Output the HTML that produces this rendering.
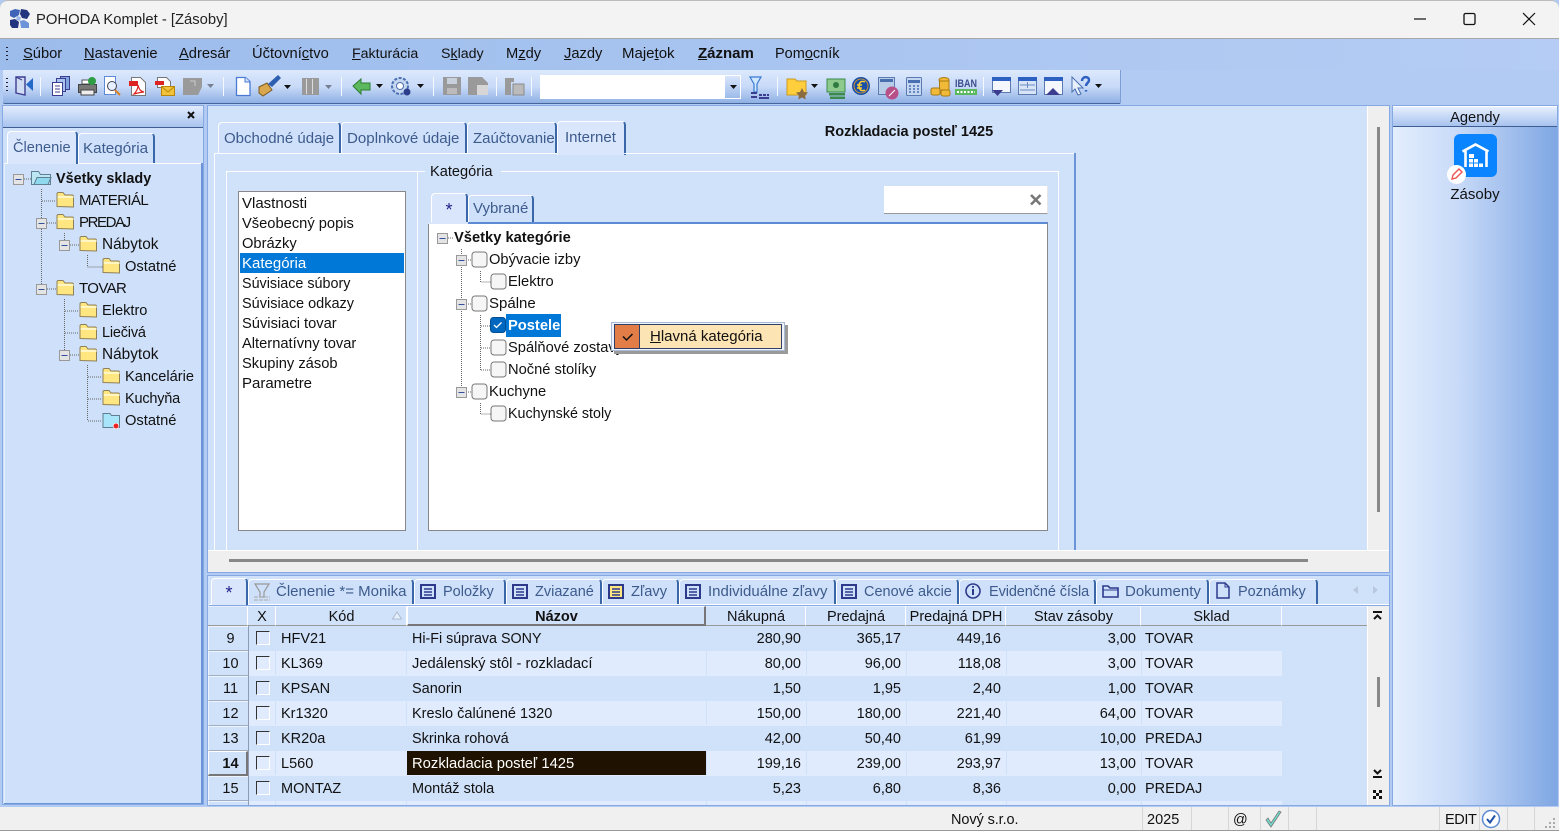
<!DOCTYPE html>
<html lang="sk"><head><meta charset="utf-8"><title>POHODA Komplet - [Zásoby]</title>
<style>
html,body{margin:0;padding:0;width:1559px;height:831px;overflow:hidden;background:#b2cbf3}
body{position:relative;font:14.7px/18px "Liberation Sans",sans-serif;color:#111}
div{position:absolute;box-sizing:border-box}
.t{white-space:nowrap;height:18px}
.g{font-size:14.5px}
.r{text-align:right}
.c{text-align:center}
.b{font-weight:bold}
.tb{color:#3d5b8c;font-size:15px}
.tab{background:#cfe0fa;border-top:1px solid #fff;border-left:1px solid #fff;border-right:2px solid #3a67a8;border-radius:4px 4px 0 0}
.act{background:#d9e6fc;border-right:2px solid #3a67a8}
.h{top:606px;height:20px;background:#d0e1fa;border-right:1px solid #fff;border-bottom:1px solid #999;border-top:1px solid #e6effe}
.rh{left:208px;width:40px;height:25px;background:#d0e1fa;border-top:1px solid #eef4fe;border-left:1px solid #eef4fe;border-bottom:1px solid #a0aec4}
.l{left:248px;width:1034px;height:25px;background:#e0ecfe}
.cb{left:256px;width:14px;height:14px;border-top:1px solid #333;border-left:1px solid #333;border-right:1px solid #fff;border-bottom:1px solid #fff;background:#d9e6fb}
.s{top:807px;width:1px;height:23px;background:#d6d6d6}
svg{position:absolute;left:0;top:0}
</style></head><body>
<!-- title -->
<div style="left:0;top:0;width:1559px;height:39px;background:#f3f3f3;border-bottom:1px solid #a8a8a8;border-radius:8px 8px 0 0;border-top:1px solid #bbb"></div>
<div class="t" style="left:36px;top:11px;font-size:14.8px;color:#222">POHODA Komplet - [Zásoby]</div>
<!-- menu -->
<div style="left:0;top:39px;width:1559px;height:31px;background:linear-gradient(90deg,#9cbcec,#b5cdf4)"></div>
<div class="t" style="left:23px;top:45px"><u>S</u>úbor</div>
<div class="t" style="left:84px;top:45px"><u>N</u>astavenie</div>
<div class="t" style="left:179px;top:45px"><u>A</u>dresár</div>
<div class="t" style="left:252px;top:45px">Účtovní<u>c</u>tvo</div>
<div class="t" style="left:352px;top:45px;font-size:14.2px"><u>F</u>akturácia</div>
<div class="t" style="left:441px;top:45px;font-size:14.2px">S<u>k</u>lady</div>
<div class="t" style="left:506px;top:45px">M<u>z</u>dy</div>
<div class="t" style="left:564px;top:45px"><u>J</u>azdy</div>
<div class="t" style="left:622px;top:45px;font-size:15px">Maje<u>t</u>ok</div>
<div class="t b" style="left:698px;top:45px;font-size:15px"><u>Z</u>áznam</div>
<div class="t" style="left:775px;top:45px;font-size:14.5px">Pom<u>o</u>cník</div>
<!-- toolbar -->
<div style="left:3px;top:70px;width:1118px;height:34px;background:linear-gradient(#dde9fd,#c8daf8 50%,#8fb0e4);border-bottom:1px solid #46659a;border-right:1px solid #7f9fd4;border-radius:0 0 2px 2px"></div>
<div style="left:540px;top:75px;width:185px;height:24px;background:#fff"></div>
<div style="left:725px;top:75px;width:16px;height:24px;background:linear-gradient(#d8e5fb,#9dbbea);border-right:1px solid #fff;border-top:1px solid #fff;border-bottom:1px solid #fff"></div>
<!-- left panel -->
<div style="left:2px;top:105px;width:202px;height:700px;background:#cfe0fa;border:1px solid #86a9e4"></div>
<div style="left:3px;top:106px;width:200px;height:22px;background:linear-gradient(#e2ecfd,#a8c3ef);border-bottom:1px solid #3f5f92"></div>
<div style="left:4px;top:163px;width:198px;height:1px;background:#fff"></div>
<div style="left:4px;top:163px;width:1px;height:640px;background:#e6effe"></div>
<div style="left:201px;top:163px;width:2px;height:641px;background:#6a93d8"></div>
<div style="left:4px;top:803px;width:199px;height:1px;background:#6a93d8"></div>
<div class="tab act" style="left:7px;top:131px;width:71px;height:33px;border-bottom:0"></div>
<div class="tab" style="left:78px;top:133px;width:77px;height:30px"></div>
<div class="t tb" style="left:13px;top:139px;font-size:14.6px">Členenie</div>
<div class="t tb" style="left:83px;top:140px;font-size:15.2px">Kategória</div>
<div class="t b" style="left:56px;top:170px;font-size:14.4px">Všetky sklady</div>
<div class="t" style="left:79px;top:192px;font-size:15px;letter-spacing:-.6px">MATERIÁL</div>
<div class="t" style="left:79px;top:214px;font-size:15px;letter-spacing:-1.4px">PREDAJ</div>
<div class="t" style="left:102px;top:236px;font-size:15.4px">Nábytok</div>
<div class="t" style="left:125px;top:258px">Ostatné</div>
<div class="t" style="left:79px;top:280px;font-size:15px;letter-spacing:-.6px">TOVAR</div>
<div class="t" style="left:102px;top:302px;font-size:14.6px">Elektro</div>
<div class="t" style="left:102px;top:324px;font-size:14.5px;letter-spacing:-.2px">Liečivá</div>
<div class="t" style="left:102px;top:346px;font-size:15.4px">Nábytok</div>
<div class="t" style="left:125px;top:368px;font-size:14.6px">Kancelárie</div>
<div class="t" style="left:125px;top:390px;font-size:14.5px;letter-spacing:-.2px">Kuchyňa</div>
<div class="t" style="left:125px;top:412px">Ostatné</div>
<!-- center panel -->
<div style="left:207px;top:105px;width:1183px;height:468px;background:#d0e1fa;border:1px solid #86a9e4"></div>
<div style="left:1367px;top:106px;width:22px;height:466px;background:#efefef;border-left:1px solid #fff"></div>
<div style="left:1377px;top:127px;width:3px;height:385px;background:#888"></div>
<div style="left:208px;top:550px;width:1181px;height:22px;background:#efefef;border-top:1px solid #fff"></div>
<div style="left:229px;top:559px;width:1079px;height:3px;background:#888"></div>
<div class="tab" style="left:218px;top:122px;width:123px;height:32px"></div>
<div class="tab" style="left:341px;top:122px;width:126px;height:32px"></div>
<div class="tab" style="left:467px;top:122px;width:90px;height:32px"></div>
<div class="tab act" style="left:557px;top:121px;width:69px;height:34px;border-bottom:0"></div>
<div class="t tb" style="left:224px;top:130px">Obchodné údaje</div>
<div class="t tb" style="left:347px;top:130px;font-size:15.1px">Doplnkové údaje</div>
<div class="t tb" style="left:473px;top:130px">Zaúčtovanie</div>
<div class="t tb" style="left:565px;top:129px">Internet</div>
<div class="t b c" style="left:760px;top:123px;width:298px;font-size:14.5px">Rozkladacia posteľ 1425</div>
<div style="left:214px;top:153px;width:862px;height:1px;background:#fff"></div>
<div style="left:557px;top:153px;width:68px;height:1px;background:#d9e6fc"></div>
<div style="left:214px;top:153px;width:1px;height:397px;background:#fff"></div>
<div style="left:1074px;top:153px;width:2px;height:397px;background:#6a93d8"></div>
<!-- group frames -->
<div style="left:226px;top:171px;width:192px;height:379px;border:1px solid #fff;border-bottom:0"></div>
<div style="left:418px;top:171px;width:641px;height:379px;border:1px solid #fff;border-bottom:0;border-left:0"></div>
<div style="left:425px;top:165px;width:76px;height:14px;background:#d0e1fa"></div>
<div class="t" style="left:430px;top:163px;font-size:14.6px">Kategória</div>
<!-- listbox -->
<div style="left:238px;top:191px;width:168px;height:340px;background:#fff;border:1px solid #888"></div>
<div style="left:240px;top:253px;width:164px;height:20px;background:#0078d7"></div>
<div class="t" style="left:242px;top:195px;font-size:15px">Vlastnosti</div>
<div class="t" style="left:242px;top:215px">Všeobecný popis</div>
<div class="t" style="left:242px;top:235px">Obrázky</div>
<div class="t" style="left:242px;top:255px;color:#fff;font-size:15px">Kategória</div>
<div class="t" style="left:242px;top:275px;font-size:14.35px">Súvisiace súbory</div>
<div class="t" style="left:242px;top:295px;font-size:14.5px">Súvisiace odkazy</div>
<div class="t" style="left:242px;top:315px">Súvisiaci tovar</div>
<div class="t" style="left:242px;top:335px">Alternatívny tovar</div>
<div class="t" style="left:242px;top:355px">Skupiny zásob</div>
<div class="t" style="left:242px;top:375px;font-size:15px">Parametre</div>
<!-- kategoria -->
<div style="left:884px;top:186px;width:164px;height:28px;background:#fff;border-bottom:1px solid #999;border-right:1px solid #e6e6e6"></div>
<div class="tab act" style="left:431px;top:193px;width:37px;height:31px;border-bottom:0"></div>
<div class="tab" style="left:468px;top:195px;width:66px;height:28px"></div>
<div class="t c" style="left:431px;top:201px;width:36px;color:#22228a;font-size:18px">*</div>
<div class="t tb" style="left:473px;top:200px">Vybrané</div>
<div style="left:428px;top:222px;width:620px;height:309px;background:#fff;border:1px solid #888;border-top:2px solid #5d8ad4"></div>
<div style="left:428px;top:222px;width:40px;height:2px;background:#d9e6fc"></div>
<div style="left:506px;top:314px;width:55px;height:23px;background:#0078d7"></div>
<div class="t b" style="left:454px;top:229px">Všetky kategórie</div>
<div class="t" style="left:489px;top:251px">Obývacie izby</div>
<div class="t" style="left:508px;top:273px">Elektro</div>
<div class="t" style="left:489px;top:295px;font-size:15px">Spálne</div>
<div class="t b" style="left:508px;top:317px;color:#fff">Postele</div>
<div class="t" style="left:508px;top:339px">Spálňové zostavy</div>
<div class="t" style="left:508px;top:361px">Nočné stolíky</div>
<div class="t" style="left:489px;top:383px">Kuchyne</div>
<div class="t" style="left:508px;top:405px;font-size:14.3px">Kuchynské stoly</div>
<!-- popup -->
<div style="left:611px;top:322px;width:174px;height:29px;background:#eef2fa;border:1px solid #a9b9d6;box-shadow:3px 3px 0 #9a9a9a"></div>
<div style="left:614px;top:324px;width:168px;height:25px;background:#fde4b4;border:1px solid #2f3f66"></div>
<div style="left:614px;top:324px;width:26px;height:25px;background:#e27d47;border:1px solid #2f3f66"></div>
<div class="t" style="left:650px;top:328px;font-size:15px"><u>H</u>lavná kategória</div>
<!-- bottom panel -->
<div style="left:207px;top:575px;width:1183px;height:231px;background:#d0e1fa;border:1px solid #86a9e4"></div>
<div style="left:209px;top:604px;width:1180px;height:2px;background:linear-gradient(#fff 50%,#86a9e4 50%)"></div>
<div class="tab act" style="left:211px;top:578px;width:37px;height:27px;border-bottom:0"></div>
<div class="tab" style="left:248px;top:579px;width:166px;height:25px"></div>
<div class="tab" style="left:414px;top:579px;width:92px;height:25px"></div>
<div class="tab" style="left:506px;top:579px;width:96px;height:25px"></div>
<div class="tab" style="left:602px;top:579px;width:77px;height:25px"></div>
<div class="tab" style="left:679px;top:579px;width:157px;height:25px"></div>
<div class="tab" style="left:836px;top:579px;width:123px;height:25px"></div>
<div class="tab" style="left:959px;top:579px;width:137px;height:25px"></div>
<div class="tab" style="left:1096px;top:579px;width:113px;height:25px"></div>
<div class="tab" style="left:1209px;top:579px;width:109px;height:25px"></div>
<div class="t c" style="left:211px;top:584px;width:36px;color:#22228a;font-size:18px">*</div>
<div class="t tb" style="left:276px;top:583px">Členenie *= Monika</div>
<div class="t tb" style="left:443px;top:583px;font-size:14.5px">Položky</div>
<div class="t tb" style="left:535px;top:583px;font-size:14.5px">Zviazané</div>
<div class="t tb" style="left:631px;top:583px;font-size:14.7px">Zľavy</div>
<div class="t tb" style="left:708px;top:583px">Individuálne zľavy</div>
<div class="t tb" style="left:864px;top:583px;font-size:14.5px">Cenové akcie</div>
<div class="t tb" style="left:989px;top:583px;font-size:14.5px;letter-spacing:-.1px">Evidenčné čísla</div>
<div class="t tb" style="left:1125px;top:583px">Dokumenty</div>
<div class="t tb" style="left:1238px;top:583px;font-size:14.5px">Poznámky</div>
<!-- grid -->
<div class="h" style="left:208px;width:40px"></div>
<div class="h" style="left:248px;width:28px"></div>
<div class="h" style="left:276px;width:131px"></div>
<div class="h" style="left:407px;width:299px;border:1px solid #fff;border-right:2px solid #777;border-bottom:2px solid #777"></div>
<div class="h" style="left:706px;width:100px"></div>
<div class="h" style="left:806px;width:100px"></div>
<div class="h" style="left:906px;width:100px"></div>
<div class="h" style="left:1006px;width:135px"></div>
<div class="h" style="left:1141px;width:141px"></div>
<div class="h" style="left:1282px;width:85px;border-right:0"></div>
<div class="t g c" style="left:248px;top:608px;width:28px">X</div>
<div class="t g c" style="left:276px;top:608px;width:131px">Kód</div>
<div class="t g c b" style="left:407px;top:608px;width:299px">Názov</div>
<div class="t g c" style="left:706px;top:608px;width:100px">Nákupná</div>
<div class="t g c" style="left:806px;top:608px;width:100px">Predajná</div>
<div class="t g c" style="left:906px;top:608px;width:100px">Predajná DPH</div>
<div class="t g c" style="left:1006px;top:608px;width:135px">Stav zásoby</div>
<div class="t g c" style="left:1141px;top:608px;width:141px">Sklad</div>
<div class="l" style="top:651px"></div><div class="l" style="top:701px"></div><div class="l" style="top:751px"></div><div class="l" style="top:801px;height:4px"></div>
<div style="left:407px;top:751px;width:299px;height:24px;background:#201200"></div>
<div class="rh" style="top:626px"></div><div class="rh" style="top:651px"></div><div class="rh" style="top:676px"></div><div class="rh" style="top:701px"></div><div class="rh" style="top:726px"></div>
<div class="rh" style="top:751px;border:1px solid #fff;border-right:2px solid #777;border-bottom:2px solid #777"></div>
<div class="rh" style="top:776px"></div><div class="rh" style="top:801px;height:4px;border-bottom:0"></div>
<div style="left:248px;top:626px;width:1px;height:179px;background:#8d9cb4"></div>
<div class="cb" style="top:631px"></div><div class="cb" style="top:656px;background:#e0ecfe"></div><div class="cb" style="top:681px"></div><div class="cb" style="top:706px;background:#e0ecfe"></div><div class="cb" style="top:731px"></div><div class="cb" style="top:756px;background:#e0ecfe"></div><div class="cb" style="top:781px"></div>
<!-- rows -->
<div class="t g c" style="left:208px;top:630px;width:45px">9</div><div class="t g" style="left:281px;top:630px">HFV21</div><div class="t g" style="left:412px;top:630px;font-size:14.3px">Hi-Fi súprava SONY</div><div class="t g r" style="left:706px;top:630px;width:95px">280,90</div><div class="t g r" style="left:806px;top:630px;width:95px">365,17</div><div class="t g r" style="left:906px;top:630px;width:95px">449,16</div><div class="t g r" style="left:1006px;top:630px;width:130px">3,00</div><div class="t g" style="left:1145px;top:630px">TOVAR</div>
<div class="t g c" style="left:208px;top:655px;width:45px">10</div><div class="t g" style="left:281px;top:655px">KL369</div><div class="t g" style="left:412px;top:655px;font-size:14.7px">Jedálenský stôl - rozkladací</div><div class="t g r" style="left:706px;top:655px;width:95px">80,00</div><div class="t g r" style="left:806px;top:655px;width:95px">96,00</div><div class="t g r" style="left:906px;top:655px;width:95px">118,08</div><div class="t g r" style="left:1006px;top:655px;width:130px">3,00</div><div class="t g" style="left:1145px;top:655px">TOVAR</div>
<div class="t g c" style="left:208px;top:680px;width:45px">11</div><div class="t g" style="left:281px;top:680px">KPSAN</div><div class="t g" style="left:412px;top:680px">Sanorin</div><div class="t g r" style="left:706px;top:680px;width:95px">1,50</div><div class="t g r" style="left:806px;top:680px;width:95px">1,95</div><div class="t g r" style="left:906px;top:680px;width:95px">2,40</div><div class="t g r" style="left:1006px;top:680px;width:130px">1,00</div><div class="t g" style="left:1145px;top:680px">TOVAR</div>
<div class="t g c" style="left:208px;top:705px;width:45px">12</div><div class="t g" style="left:281px;top:705px">Kr1320</div><div class="t g" style="left:412px;top:705px">Kreslo čalúnené 1320</div><div class="t g r" style="left:706px;top:705px;width:95px">150,00</div><div class="t g r" style="left:806px;top:705px;width:95px">180,00</div><div class="t g r" style="left:906px;top:705px;width:95px">221,40</div><div class="t g r" style="left:1006px;top:705px;width:130px">64,00</div><div class="t g" style="left:1145px;top:705px">TOVAR</div>
<div class="t g c" style="left:208px;top:730px;width:45px">13</div><div class="t g" style="left:281px;top:730px">KR20a</div><div class="t g" style="left:412px;top:730px">Skrinka rohová</div><div class="t g r" style="left:706px;top:730px;width:95px">42,00</div><div class="t g r" style="left:806px;top:730px;width:95px">50,40</div><div class="t g r" style="left:906px;top:730px;width:95px">61,99</div><div class="t g r" style="left:1006px;top:730px;width:130px">10,00</div><div class="t g" style="left:1145px;top:730px">PREDAJ</div>
<div class="t g c b" style="left:208px;top:755px;width:45px">14</div><div class="t g" style="left:281px;top:755px">L560</div><div class="t g" style="left:412px;top:755px;color:#fff;font-size:14.8px">Rozkladacia posteľ 1425</div><div class="t g r" style="left:706px;top:755px;width:95px">199,16</div><div class="t g r" style="left:806px;top:755px;width:95px">239,00</div><div class="t g r" style="left:906px;top:755px;width:95px">293,97</div><div class="t g r" style="left:1006px;top:755px;width:130px">13,00</div><div class="t g" style="left:1145px;top:755px">TOVAR</div>
<div class="t g c" style="left:208px;top:780px;width:45px">15</div><div class="t g" style="left:281px;top:780px">MONTAZ</div><div class="t g" style="left:412px;top:780px">Montáž stola</div><div class="t g r" style="left:706px;top:780px;width:95px">5,23</div><div class="t g r" style="left:806px;top:780px;width:95px">6,80</div><div class="t g r" style="left:906px;top:780px;width:95px">8,36</div><div class="t g r" style="left:1006px;top:780px;width:130px">0,00</div><div class="t g" style="left:1145px;top:780px">PREDAJ</div>
<!-- grid scroll -->
<div style="left:1367px;top:606px;width:22px;height:199px;background:#efefef;border-left:1px solid #fff"></div>
<div style="left:1377px;top:677px;width:3px;height:30px;background:#888"></div>
<!-- right -->
<div style="left:1392px;top:105px;width:166px;height:701px;background:linear-gradient(90deg,#e3eefe,#c8daf8 40%,#7fa7e3);border:1px solid #86a9e4"></div>
<div style="left:1393px;top:106px;width:164px;height:21px;background:linear-gradient(#e6effd,#a7c2ef);border-bottom:1px solid #3f5f92;border-top:1px solid #fff"></div>
<div class="t c" style="left:1393px;top:109px;width:164px">Agendy</div>
<div class="t c" style="left:1393px;top:186px;width:164px;font-size:15px">Zásoby</div>
<!-- status -->
<div style="left:0;top:807px;width:1559px;height:24px;background:#f0f0f0;border-bottom:1px solid #999"></div>
<div class="s" style="left:1142px"></div><div class="s" style="left:1191px"></div><div class="s" style="left:1228px"></div><div class="s" style="left:1260px"></div><div class="s" style="left:1288px"></div><div class="s" style="left:1316px"></div><div class="s" style="left:1439px"></div><div class="s" style="left:1479px"></div><div class="s" style="left:1507px"></div><div class="s" style="left:1534px"></div>
<div class="t g" style="left:951px;top:811px;font-size:14.5px;letter-spacing:-.1px">Nový s.r.o.</div>
<div class="t g" style="left:1147px;top:811px">2025</div>
<div class="t g" style="left:1233px;top:811px">@</div>
<div class="t g" style="left:1445px;top:811px;letter-spacing:-.4px">EDIT</div>

<svg width="1559" height="831" viewBox="0 0 1559 831" fill="none">
<defs>
<g id="f"><path d="M.5 14.500V2q0-1.500 1.500-1.500h4.500l2 2.500h7q1.500 0 1.500 1.500v10.500z" fill="#ffe680" stroke="#8d8058"/><path d="M1 4h16v2H1z" fill="#fff6c4"/></g>
<g id="e"><rect x=".5" y=".5" width="10" height="10" fill="#e4e4e4" stroke="#999"/><path d="M2.500 5.500h6" stroke="#33509a"/></g>
<g id="k"><rect x=".5" y=".5" width="15" height="15" rx="3" fill="#f6f6f6" stroke="#777"/></g>
<g id="li" stroke="#2d3a8c" stroke-width="2"><rect x="1" y="1" width="14" height="13" fill="none"/><path d="M4 5h8M4 8h8M4 11h8" stroke-width="1.400"/></g>
<g id="dr"><path d="M0 0h7l-3.500 4z" fill="#111"/></g>
</defs>
<!-- title icon -->
<g><path d="M10 11l5-2 5 1-1 5-5 3-4-2z" fill="#3f64b8"/><path d="M21 9l6 1 3 4-3 5-5-1-2-4z" fill="#24357f"/><path d="M10 20l5-1 4 3-1 6h-6l-2-3z" fill="#24357f"/><path d="M20 21l4-1 5 3v5h-8z" fill="#6d93d8"/><path d="M17 16l4 1-1 4-4-1z" fill="#9db8e8"/></g>
<path d="M1414 19h12" stroke="#111" stroke-width="1.200"/><rect x="1464" y="13.500" width="11" height="11" rx="1.500" stroke="#111" stroke-width="1.300"/><path d="M1523 13l12 12M1535 13l-12 12" stroke="#111" stroke-width="1.200"/>
<!-- grip -->
<path d="M7 47v1M7 51v1M7 55v1M7 59v1M7 78v1M7 82v1M7 86v1M7 90v1" stroke="#223" stroke-width="2"/>
<!-- toolbar -->
<path d="M40.500 77v19M223.500 77v19M341.500 77v19M433.500 77v19M496.500 77v19M531.500 77v19M777.500 77v19M983.500 77v19" stroke="#f4f8ff"/>
<path d="M16 77h9v18l-9-2z" fill="#cfdcf4" stroke="#3d3d8f" stroke-width="1.400"/><path d="M22 80l-6-3M25 77v15" stroke="#3d3d8f"/><path d="M33 78v13l-7-6.500z" fill="#2468c8"/>
<g stroke="#3d3d8f"><path d="M60.500 76.500h9v13h-9z" fill="#7fa5e0"/><path d="M56.500 78.500h9v13h-9z" fill="#a8c3ef"/><path d="M52.500 82.500h10v13h-10z" fill="#fff"/><path d="M55 86h5M55 89h5M55 92h5"/></g>
<path d="M82 80h10v4H82z" fill="#fff" stroke="#555"/><rect x="78.500" y="84.500" width="18" height="8" fill="#777" stroke="#444"/><rect x="81" y="90" width="13" height="5" fill="#eee" stroke="#444"/><circle cx="92" cy="81" r="4" fill="#2e9e44"/>
<path d="M104.500 76.500h11v18h-11z" fill="#fff" stroke="#5d8ad4"/><circle cx="112" cy="86" r="4.500" fill="#e6f0ff" stroke="#445"/><path d="M115 90l5 5" stroke="#d88020" stroke-width="2"/>
<path d="M131.500 77.500h9l5 5v13h-14z" fill="#fff" stroke="#777"/><rect x="129" y="81" width="9" height="5" fill="#d22"/><path d="M134 94c3-3 4-6 4-9 1 4 2 6 6 7-3 0-6 1-10 2z" stroke="#d22" stroke-width="1.200"/>
<path d="M157.500 77.500h9l4 4v6h-13z" fill="#fff" stroke="#777"/><rect x="155" y="81" width="9" height="4" fill="#d22"/><rect x="161.500" y="86.500" width="13" height="9" fill="#f2c23a" stroke="#b8860b"/><path d="M162 87l6 5 6-5" stroke="#b8860b"/>
<path d="M183 78h19v9l-4 8h-15z" fill="#9a9a9a"/><path d="M190 81h5v5" stroke="#ccc"/>
<use href="#dr" x="207" y="84" opacity=".45"/>
<path d="M236.500 77.500h9l4.500 4v14h-13.500z" fill="#fff" stroke="#4a7ad4" stroke-width="1.300"/><path d="M245 77v5h5" fill="#cfe0fa" stroke="#4a7ad4"/>
<path d="M259 87l8-4 5 7-9 6-4-3z" fill="#d9a84e" stroke="#7a5a20"/><path d="M268 84l10-9 3 3-9 9z" fill="#2d5fb0"/>
<use href="#dr" x="284" y="85"/>
<path d="M302 78h17v17h-17z" fill="#9a9a9a"/><path d="M306.500 79v15M312.500 79v15" stroke="#ddd"/>
<use href="#dr" x="325" y="85" opacity=".45"/>
<path d="M353 86l8-7v4h9v7h-9v4z" fill="#5cb85c" stroke="#2e7d32"/>
<use href="#dr" x="376" y="84"/>
<circle cx="400" cy="86" r="8" fill="#c5d6f0" stroke="#4a6fb0" stroke-width="2" stroke-dasharray="3 1.500"/><circle cx="400" cy="86" r="3.500" fill="#fff" stroke="#4a6fb0"/><circle cx="407" cy="92" r="3.500" fill="#2d3f8c"/>
<use href="#dr" x="417" y="84"/>
<path d="M443 77h18v18h-18z" fill="#9a9a9a"/><rect x="447" y="78" width="10" height="6" fill="#c8d0dc"/><rect x="447" y="88" width="10" height="6" fill="#bbb"/>
<path d="M468 77h14l6 6v12h-20z" fill="#9a9a9a"/><rect x="477" y="85" width="11" height="10" fill="#fff" opacity=".6"/>
<path d="M505 78h9v4h-9zM505 82h6v13h-6z" fill="#9a9a9a"/><path d="M513 84h11v11h-11z" fill="#bbb" stroke="#8a8a8a"/>
<use href="#dr" x="730" y="85"/>
<path d="M750 77h11l-4 7v8h-3v-8z" fill="#cfe6ff" stroke="#3a7ad0" stroke-width="1.200"/><path d="M751 92h6v2h-6zM751 96h6v2h-6zM759 94h3v2h-3zM763 94h3v2h-3zM767 94h2v2h-2zM759 97h10v2h-10z" fill="#3d3d8f"/>
<path d="M787 79h8l2 2h9v14h-19z" fill="#ffce3d" stroke="#c89a20"/><path d="M802 88l2 4 4 .5-3 3 .8 4-3.800-2-3.800 2 .8-4-3-3 4-.5z" fill="#8a6a40"/>
<use href="#dr" x="811" y="84"/>
<path d="M827 79h18v13h-18z" fill="#8ec98e" stroke="#3a8a4a"/><circle cx="836" cy="85" r="3" fill="#2f7a3e"/><path d="M829 93h16v2.500h-16zM830 96.500h15v2.500h-15z" fill="#3a8a4a"/>
<circle cx="861" cy="86" r="9" fill="#1a4fa8"/><circle cx="861" cy="86" r="7" stroke="#e8a020" stroke-width=".8"/><path d="M865 82c-4-2-6 1-6 4s2 6 6 4M857 85h5M857 88h5" stroke="#ffcf30" stroke-width="1.500"/>
<rect x="878.500" y="77.500" width="16" height="17" fill="#b8cde8" stroke="#5a7ab0"/><rect x="880" y="79" width="13" height="3" fill="#4a6fb0"/><circle cx="892" cy="93" r="6.500" fill="#b8508a"/><path d="M889 96l6-6" stroke="#fff"/>
<rect x="906.500" y="77.500" width="15" height="18" rx="1" fill="#c5d6f0" stroke="#5a7ab0"/><rect x="908" y="80" width="12" height="3" fill="#4a6fb0"/><path d="M909 86h2M913 86h2M917 86h2M909 89h2M913 89h2M917 89h2M909 92h2M913 92h2M917 92h2" stroke="#4a6fb0" stroke-width="1.500"/>
<g fill="#f0b93a" stroke="#a87a10"><ellipse cx="944" cy="80" rx="5" ry="2.500"/><rect x="939.500" y="81" width="9.500" height="9"/><rect x="931" y="88" width="9" height="7" rx="2"/><rect x="941" y="90" width="9" height="6" rx="2"/></g>
<text x="955" y="87" font-family="Liberation Sans,sans-serif" font-size="11" font-weight="bold" fill="#3d4f8c" textLength="22" lengthAdjust="spacingAndGlyphs">IBAN</text><path d="M955 89h22v6h-22z" fill="#5cb85c"/><path d="M957 92h18" stroke="#fff" stroke-width="2" stroke-dasharray="2 1.500"/>
<rect x="992.500" y="77.500" width="18" height="15" fill="#f4f7fd" stroke="#5a7ab0"/><rect x="992" y="77" width="19" height="4" fill="#2d60c0"/><path d="M992 90h11l-5.500 6z" fill="#3d3d8f"/>
<rect x="1018.500" y="77.500" width="18" height="17" fill="#d8e4f8" stroke="#5a7ab0"/><rect x="1018" y="77" width="19" height="4" fill="#2d60c0"/><path d="M1020 85h15M1027.500 82v6M1020 90h15" stroke="#6a8ac0"/>
<rect x="1044.500" y="77.500" width="18" height="17" fill="#f4f7fd" stroke="#5a7ab0"/><rect x="1044" y="77" width="19" height="4" fill="#2d60c0"/><path d="M1046 95l7-7 7 7z" fill="#3d3d8f"/>
<path d="M1072 77l11 11h-5l3 6-3 1-3-6-3 3z" fill="#e8f0fc" stroke="#4a6fb0"/><path d="M1082 81c0-5 7-5 7-1 0 3-3 3-3 6M1086 90v1.500" stroke="#2d60c0" stroke-width="2.400"/>
<use href="#dr" x="1095" y="84"/>
<!-- left close + tree -->
<path d="M188 112l6 6M194 112l-6 6" stroke="#111" stroke-width="2"/>
<g stroke="#666" stroke-dasharray="1 1">
<path d="M24 179h7M41.500 189v95M42 201h14M47 223h9M64.500 233v7M70 245h9M87.500 255v12h15M47 289h9M64.500 299v51M65 311h14M65 333h14M70 355h9M87.500 365v56M88 377h14M88 399h14M88 421h14"/>
<path d="M448 238h6M461.500 249v138M466 260h6M466 304h6M466 392h6M480.500 271v11h10M480.500 315v55M481 326h10M481 348h10M481 370h10M480.500 403v11h10"/>
</g>
<use href="#e" x="13" y="174"/><use href="#e" x="36" y="218"/><use href="#e" x="59" y="240"/><use href="#e" x="36" y="284"/><use href="#e" x="59" y="350"/>
<path d="M31.500 184.500V171.500h7l2 3h10v10z" fill="#bde6f5" stroke="#5f8090"/><path d="M34 184.500l3-7h14l-3 7z" fill="#8fd8ee" stroke="#5f8090"/>
<use href="#f" x="56.500" y="192"/><use href="#f" x="56.500" y="214"/><use href="#f" x="79.500" y="236"/><use href="#f" x="102.500" y="258"/><use href="#f" x="56.500" y="280"/><use href="#f" x="79.500" y="302"/><use href="#f" x="79.500" y="324"/><use href="#f" x="79.500" y="346"/><use href="#f" x="102.500" y="368"/><use href="#f" x="102.500" y="390"/>
<path d="M103 427.500v-14h7l1.500 2h8v12z" fill="#a8e4fa" stroke="#607f8e"/><circle cx="116" cy="426" r="2.800" fill="#e22" stroke="#fff" stroke-width=".6"/>
<!-- tree center -->
<use href="#e" x="437" y="233"/><use href="#e" x="456" y="255"/><use href="#e" x="456" y="299"/><use href="#e" x="456" y="387"/>
<use href="#k" x="471.500" y="251.500"/><use href="#k" x="490.500" y="273.500"/><use href="#k" x="471.500" y="295.500"/><use href="#k" x="490.500" y="339.500"/><use href="#k" x="490.500" y="361.500"/><use href="#k" x="471.500" y="383.500"/><use href="#k" x="490.500" y="405.500"/>
<rect x="490.500" y="317.500" width="15" height="15" rx="3" fill="#0067c0" stroke="#004e92"/><path d="M494 325l2.500 2.500 5-5" stroke="#fff" stroke-width="1.300"/>
<path d="M623 336.500l3.500 3.500 6-6" stroke="#111" stroke-width="1.500"/>
<path d="M1031 195l9.500 9.500M1040.500 195l-9.500 9.500" stroke="#777" stroke-width="2.600"/>
<!-- bottom tabs -->
<path d="M255 584h14l-5 8v5h-4v-5z" stroke="#999" stroke-width="1.200"/><path d="M254 597h16M254 600h16" stroke="#aaa" stroke-dasharray="4 1"/>
<use href="#li" x="420" y="584"/><use href="#li" x="512" y="584"/>
<g stroke="#2d3a8c" stroke-width="2"><rect x="609" y="585" width="14" height="13" fill="#ffe680"/><path d="M612 589h8M612 592h8M612 595h8" stroke-width="1.400"/></g>
<use href="#li" x="685" y="584"/><use href="#li" x="841" y="584"/>
<circle cx="973" cy="591" r="7" stroke="#2d3a8c" stroke-width="1.600"/><path d="M973 589v6M973 586v1.700" stroke="#2d3a8c" stroke-width="2"/>
<path d="M1103 597v-11h5l2 2h8v9z" stroke="#2d3a8c" stroke-width="1.600"/><path d="M1103 590h15" stroke="#2d3a8c"/>
<path d="M1217 583h8l4 4v11h-12z" stroke="#2d3a8c" stroke-width="1.500"/><path d="M1225 583v4h4" stroke="#2d3a8c"/>
<path d="M1358 586v8l-5-4zM1373 586v8l5-4z" fill="#b9c8de"/>
<!-- grid details -->
<path d="M397 612l4.500 7h-9z" stroke="#aebccf" fill="#e5eefc"/>
<path d="M275.500 651v24M406.500 651v24M706.500 651v24M806.500 651v24M906.500 651v24M1006.500 651v24M1141.500 651v24M275.500 701v24M406.500 701v24M706.500 701v24M806.500 701v24M906.500 701v24M1006.500 701v24M1141.500 701v24M275.500 751v24M706.500 751v24M806.500 751v24M906.500 751v24M1006.500 751v24M1141.500 751v24M275.500 801v4M406.500 801v4M706.500 801v4M806.500 801v4M906.500 801v4M1006.500 801v4M1141.500 801v4" stroke="#cfe0fa"/>
<path d="M1373 612h9M1374 619l3.500-3.500 3.500 3.500" stroke="#111" stroke-width="2"/>
<path d="M1373 777h9M1374 770l3.500 3.500 3.500-3.500" stroke="#111" stroke-width="2"/>
<path d="M1373 790h3v3h-3zM1379 790h3v3h-3zM1376 793h3v3h-3zM1373 796h3v3h-3zM1379 796h3v3h-3z" fill="#111"/>
<!-- right icon -->
<rect x="1454" y="134" width="43" height="43" rx="6" fill="#0a84ff"/>
<path d="M1465.500 167v-16M1486.500 167v-16M1462.500 151.500l13-7 13 7" stroke="#fff" stroke-width="2.600"/>
<path d="M1469 154h5v4h-5zM1469 159h4v3.500h-4zM1474 159h4v3.500h-4zM1469 163.500h4v3.500h-4zM1474 163.500h4v3.500h-4zM1479 163.500h4v3.500h-4z" fill="#fff"/>
<circle cx="1456.500" cy="174.500" r="9.500" fill="#fff"/><path d="M1452 179l1-4 6-6 3 3-6 6z" stroke="#ef5350" stroke-width="1.400"/>
<!-- status -->
<path d="M1266 820l5 7 10-15-2-1-8 12-3-5z" fill="#6fe0d0" stroke="#777" stroke-width=".8"/>
<circle cx="1491" cy="819" r="8.500" fill="#fff" stroke="#5d8ad4" stroke-width="1.500"/><path d="M1487 819l3 3.500 5-7" stroke="#1f4fa8" stroke-width="2"/>
<path d="M1553 818h2v2h-2zM1549 822h2v2h-2zM1553 822h2v2h-2zM1545 826h2v2h-2zM1549 826h2v2h-2zM1553 826h2v2h-2z" fill="#aaa"/>
</svg>
</body></html>
